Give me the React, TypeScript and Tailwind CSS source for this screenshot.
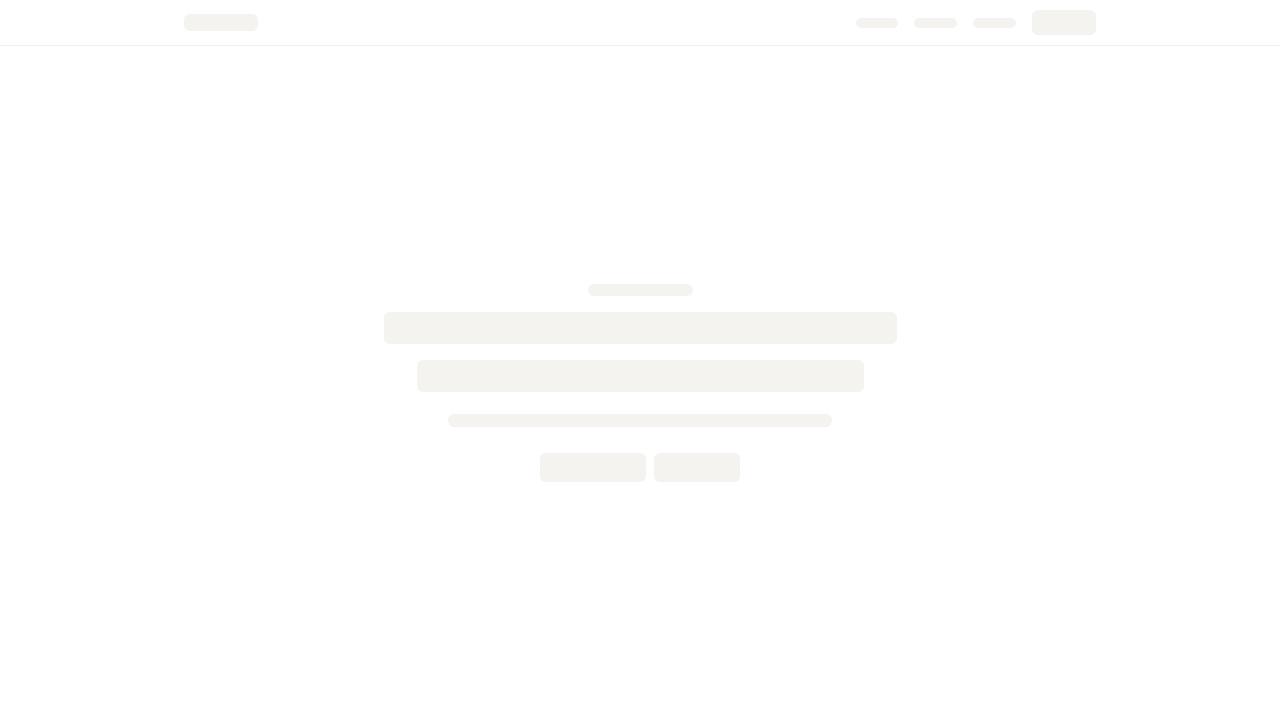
function Bone({ className }: { className: string }) {
  return <div className={`rounded-md bg-[#f4f3f0] ${className}`} />;
}

export default function App() {
  return (
    <div className="flex min-h-screen flex-col bg-white font-['Inter',sans-serif]">
      <header className="h-[46px] border-b border-[#f1f0ee]">
        <div className="mx-auto flex h-full max-w-[912px] items-center justify-between">
          <Bone className="h-[17px] w-[74px]" />
          <nav className="flex items-center gap-4">
            <Bone className="h-[10px] w-[42px] rounded-full" />
            <Bone className="h-[10px] w-[43px] rounded-full" />
            <Bone className="h-[10px] w-[43px] rounded-full" />
            <Bone className="h-[25px] w-[64px] rounded-lg" />
          </nav>
        </div>
      </header>

      <main className="flex flex-1 items-center justify-center px-4">
        <div className="flex flex-col items-center">
          <Bone className="h-[12px] w-[105px] rounded-full" />
          <Bone className="mt-4 h-[32px] w-[513px] rounded-lg" />
          <Bone className="mt-4 h-[32px] w-[447px] rounded-lg" />
          <Bone className="mt-[22px] h-[13px] w-[384px] rounded-full" />
          <div className="mt-[26px] flex gap-2">
            <Bone className="h-[29px] w-[106px]" />
            <Bone className="h-[29px] w-[86px]" />
          </div>
        </div>
      </main>
    </div>
  );
}
